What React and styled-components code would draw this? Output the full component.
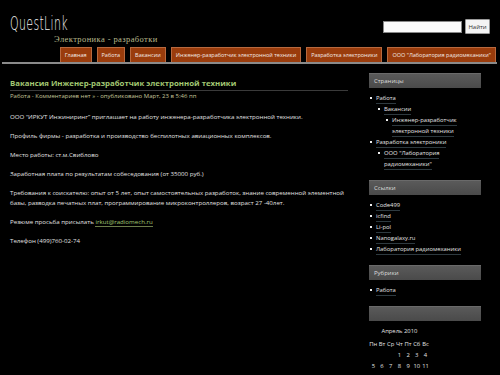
import React from 'react';
import styled, { createGlobalStyle } from 'styled-components';

const GlobalStyle = createGlobalStyle`
    html, body {
        margin: 0;
        padding: 0;
        background: #000;
    }
    body {
        font-family: "Open Sans", "DejaVu Sans", sans-serif;
        color: #c8c8c8;
        overflow: hidden;
    }
`

const menu = [
    'Главная',
    'Работа',
    'Вакансии',
    'Инженер-разработчик электронной техники',
    'Разработка электроники',
    'ООО "Лаборатория радиомеханики"',
]

const pages = [
    { title: 'Работа', level: 0 },
    { title: 'Вакансии', level: 1 },
    { title: 'Инженер-разработчик электронной техники', level: 2 },
    { title: 'Разработка электроники', level: 0 },
    { title: 'ООО "Лаборатория радиомеханики"', level: 1 },
]

const links = ['Code499', 'icfind', 'Li-pol', 'Nanogalaxy.ru', 'Лаборатория радиомеханики']

const calendar = [
    ['', '', '', '1', '2', '3', '4'],
    ['5', '6', '7', '8', '9', '10', '11'],
    ['12', '13', '14', '15', '16', '17', '18'],
]

const App = () => {
    return (
        <Page>
            <GlobalStyle />
            <Header>
                <TopRow>
                    <Logo>QuestLink</Logo>
                    <Search>
                        <SearchInput type="text" />
                        <SearchButton>Найти</SearchButton>
                    </Search>
                </TopRow>
                <Tagline>Электроника - разработки</Tagline>
                <Nav>
                    {menu.map((item) => (
                        <Tab key={item}>{item}</Tab>
                    ))}
                </Nav>
                <NavLine />
            </Header>
            <Content>
                <Main>
                    <PostTitle>Вакансия Инженер-разработчик электронной техники</PostTitle>
                    <Meta>Работа - Комментариев нет » - опубликовано Март, 23 в 5:46 пп</Meta>
                    <Para>ООО “ИРКУТ Инжиниринг” приглашает на работу инженера-разработчика электронной техники.</Para>
                    <Para>Профиль фирмы - разработка и производство беспилотных авиационных комплексов.</Para>
                    <Para>Место работы: ст.м.Свиблово</Para>
                    <Para>Заработная плата по результатам собеседования (от 35000 руб.)</Para>
                    <Para>Требования к соискателю: опыт от 5 лет, опыт самостоятельных разработок, знание современной элементной базы, разводка печатных плат, программирование микроконтроллеров, возраст 27 -40лет.</Para>
                    <Para>Резюме просьба присылать <Mail>irkut@radiomech.ru</Mail></Para>
                    <Para>Телефон (499)760-02-74</Para>
                </Main>
                <Sidebar>
                    <Widget>
                        <WidgetTitle>Страницы</WidgetTitle>
                        <List>
                            {pages.map((p) => (
                                <Item key={p.title} level={p.level}>
                                    <ItemLink>{p.title}</ItemLink>
                                </Item>
                            ))}
                        </List>
                    </Widget>
                    <Widget>
                        <WidgetTitle>Ссылки</WidgetTitle>
                        <List>
                            {links.map((l) => (
                                <Item key={l} level={0}>
                                    <ItemLink>{l}</ItemLink>
                                </Item>
                            ))}
                        </List>
                    </Widget>
                    <Widget>
                        <WidgetTitle>Рубрики</WidgetTitle>
                        <List>
                            <Item level={0}><ItemLink>Работа</ItemLink></Item>
                        </List>
                    </Widget>
                    <Widget>
                        <WidgetTitle />
                        <Calendar>
                            <caption>Апрель 2010</caption>
                            <thead>
                                <tr>
                                    {['Пн', 'Вт', 'Ср', 'Чт', 'Пт', 'Сб', 'Вс'].map((d) => (
                                        <th key={d}>{d}</th>
                                    ))}
                                </tr>
                            </thead>
                            <tbody>
                                {calendar.map((row, i) => (
                                    <tr key={i}>
                                        {row.map((d, j) => (
                                            <td key={j}>{d}</td>
                                        ))}
                                    </tr>
                                ))}
                            </tbody>
                        </Calendar>
                    </Widget>
                </Sidebar>
            </Content>
        </Page>
    )
}

const Page = styled.div`
    width: 500px;
    height: 375px;
    background: #000;
    overflow: hidden;
`

const Header = styled.div`
    padding-top: 13px;
`

const TopRow = styled.div`
    display: flex;
    justify-content: space-between;
    align-items: flex-start;
    padding: 0 10px 0 10px;
    height: 20px;
`

const Logo = styled.div`
    font-family: "DejaVu Sans", sans-serif;
    font-stretch: condensed;
    font-size: 20px;
    font-weight: 300;
    color: #f2f2f2;
    line-height: 20px;
    display: inline-block;
    transform: scaleX(0.55);
    transform-origin: left center;
    letter-spacing: 0.6px;
`

const Search = styled.div`
    display: flex;
    align-items: center;
    gap: 3px;
    margin-top: 6px;
`

const SearchInput = styled.input`
    width: 77px;
    height: 10px;
    padding: 0;
    border: 1px solid #888;
    background: #fafafa;
    outline: none;
`

const SearchButton = styled.button`
    height: 15px;
    width: 25px;
    padding: 0;
    font-family: "Open Sans", sans-serif;
    font-size: 6px;
    color: #333;
    background: #f4f4f4;
    border: 1px solid #999;
    border-radius: 1px;
`

const Tagline = styled.div`
    font-family: "Liberation Serif", serif;
    font-size: 8.5px;
    letter-spacing: 0.4px;
    color: #b9b98c;
    padding-left: 54px;
    height: 14px;
    line-height: 12px;
`

const Nav = styled.div`
    display: flex;
    justify-content: flex-end;
    gap: 5px;
    padding-right: 4px;
`

const Tab = styled.div`
    background: #9a3c0c;
    border: 1px solid #b8693e;
    border-bottom: none;
    color: #f4ebe6;
    font-size: 5.5px;
    height: 14px;
    line-height: 14px;
    padding: 0 4px;
    white-space: nowrap;
`

const NavLine = styled.div`
    height: 2px;
    background: #8a8a8a;
    margin: 0 3px 0 2px;
`

const Content = styled.div`
    display: flex;
    padding: 0 0 0 10px;
    margin-top: 13px;
`

const Main = styled.div`
    width: 338px;
`

const PostTitle = styled.h2`
    margin: 0;
    font-size: 7.8px;
    font-weight: bold;
    color: #a3c873;
    line-height: 12px;
    border-bottom: 1px solid #3a3a3a;
    padding-bottom: 1px;
`

const Meta = styled.div`
    font-size: 6px;
    color: #c4c49a;
    margin-top: 1px;
    line-height: 9px;
`

const Para = styled.p`
    font-size: 6.15px;
    line-height: 10px;
    color: #e0e0e0;
    margin: 0;
    margin-top: 9px;
    &:first-of-type {
        margin-top: 11px;
    }
`

const Mail = styled.span`
    color: #a3c873;
    border-bottom: 1px solid #6b7d4a;
`

const Sidebar = styled.div`
    width: 112px;
    margin-left: 21px;
    margin-top: -4px;
    display: flex;
    flex-direction: column;
    gap: 10px;
`

const Widget = styled.div``

const WidgetTitle = styled.div`
    height: 15px;
    line-height: 15px;
    background: linear-gradient(#5a5a5a, #4a4a4a);
    border-top: 1px solid #6a6a6a;
    box-sizing: border-box;
    color: #ddd;
    font-size: 6px;
    padding-left: 5px;
`

const List = styled.ul`
    list-style: none;
    margin: 5px 0 0 0;
    padding: 0;
`

const Item = styled.li`
    position: relative;
    padding-left: ${(props) => 7 + props.level * 8}px;
    font-size: 5.85px;
    line-height: 11px;
    color: #e4e4e4;

    &::before {
        content: '';
        position: absolute;
        left: ${(props) => 1 + props.level * 8}px;
        top: 4px;
        width: 2px;
        height: 2px;
        background: #eee;
    }
`

const ItemLink = styled.span`
    border-bottom: 1px solid #2e3a40;
    padding-bottom: 1px;
`

const Calendar = styled.table`
    margin-top: 4px;
    border-collapse: collapse;
    font-size: 5.85px;
    color: #e4e4e4;
    margin-left: 0;

    caption {
        text-align: center;
        line-height: 12px;
        padding-bottom: 1px;
    }

    th, td {
        padding: 0;
        width: 8.7px;
        height: 11px;
        text-align: center;
        font-weight: normal;
    }
`

export default App;
